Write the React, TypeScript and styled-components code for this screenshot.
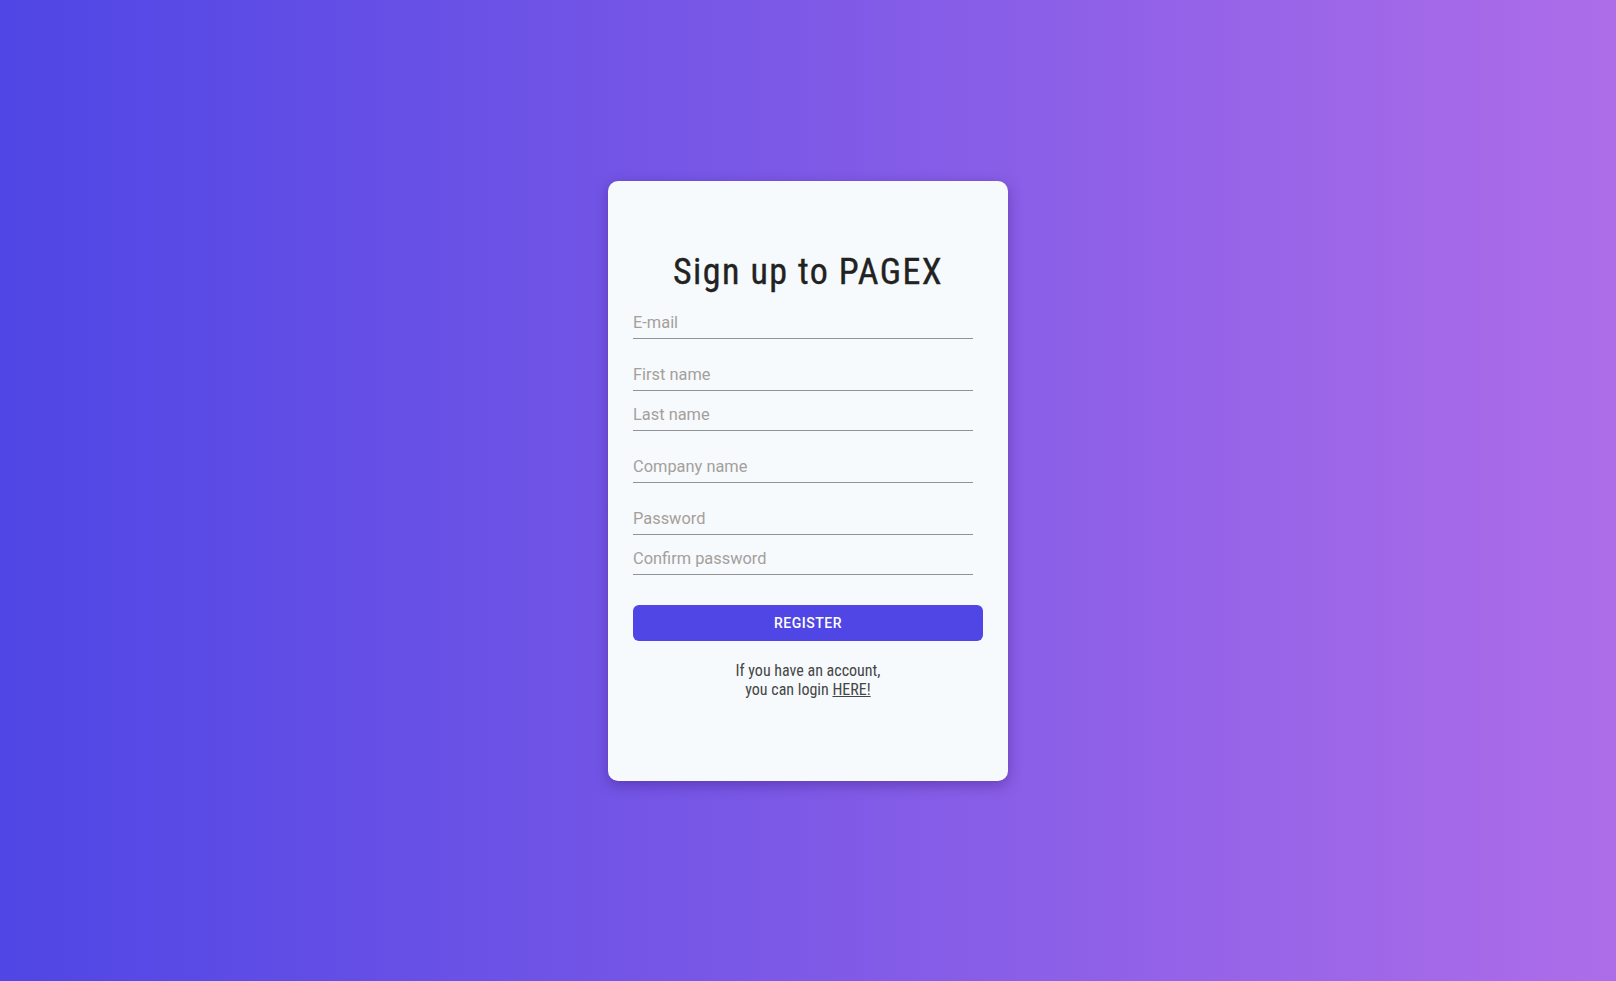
import React from "react";
import styled, { createGlobalStyle } from "styled-components";

const GlobalStyle = createGlobalStyle`
  html, body { margin: 0; padding: 0; height: 100%; }
  body {
    font-family: Roboto, "Noto Sans", sans-serif;
    -webkit-font-smoothing: antialiased;
  }
  #root { min-height: 100vh; }
  * { box-sizing: border-box; }
`;

const Page = styled.main`
  min-height: 100vh;
  display: flex;
  align-items: center;
  justify-content: center;
  padding-bottom: 19px;
  background: linear-gradient(to right, #4f46e5 0%, #ad6de9 100%);
`;

const Card = styled.section`
  width: 400px;
  height: 600px;
  background: #f6fafd;
  border-radius: 10px;
  box-shadow: 0 4px 14px rgba(40, 10, 90, 0.35);
  padding: 68px 25px 0 25px;
  display: flex;
  flex-direction: column;
`;

const Title = styled.h1`
  margin: 0 0 4px 0;
  font-family: "Roboto Condensed", Roboto, sans-serif;
  font-stretch: 75%;
  font-weight: 400;
  font-size: 36px;
  line-height: 46px;
  letter-spacing: 1.4px;
  color: #222222;
  -webkit-text-stroke: 0.35px #222222;
  text-align: center;
`;

const Form = styled.form`
  display: flex;
  flex-direction: column;
`;

const Group = styled.div`
  display: flex;
  flex-direction: column;
  margin-bottom: 12px;
  &:last-of-type { margin-bottom: 0; }
`;

const Field = styled.input`
  width: 340px;
  height: 40px;
  padding: 8px 0 0 0;
  border: none;
  border-bottom: 1px solid #909398;
  background: transparent;
  font-family: Roboto, sans-serif;
  font-size: 16.4px;
  color: #333;
  outline: none;
  &::placeholder { color: #a59f9c; }
`;

const Button = styled.button`
  margin-top: 30px;
  width: 350px;
  height: 36px;
  border: none;
  border-radius: 6px;
  background: #4f46e5;
  color: #ffffff;
  font-family: Roboto, sans-serif;
  font-weight: 500;
  font-size: 14px;
  letter-spacing: 0.5px;
  text-transform: uppercase;
  cursor: pointer;
`;

const Note = styled.p`
  margin: 20px 0 0 0;
  font-family: "Roboto Condensed", Roboto, sans-serif;
  font-stretch: 75%;
  font-size: 16px;
  line-height: 19px;
  color: #464646;
  text-align: center;
`;

const Link = styled.a`
  color: #464646;
  text-decoration: underline;
`;

export default function App() {
  return (
    <>
      <GlobalStyle />
      <Page>
        <Card>
          <Title>Sign up to PAGEX</Title>
          <Form onSubmit={(e) => e.preventDefault()}>
            <Group>
              <Field type="email" placeholder="E-mail" />
            </Group>
            <Group>
              <Field type="text" placeholder="First name" />
              <Field type="text" placeholder="Last name" />
            </Group>
            <Group>
              <Field type="text" placeholder="Company name" />
            </Group>
            <Group>
              <Field type="password" placeholder="Password" />
              <Field type="password" placeholder="Confirm password" />
            </Group>
            <Button type="submit">Register</Button>
          </Form>
          <Note>
            If you have an account,
            <br />
            you can login <Link href="#">HERE!</Link>
          </Note>
        </Card>
      </Page>
    </>
  );
}
